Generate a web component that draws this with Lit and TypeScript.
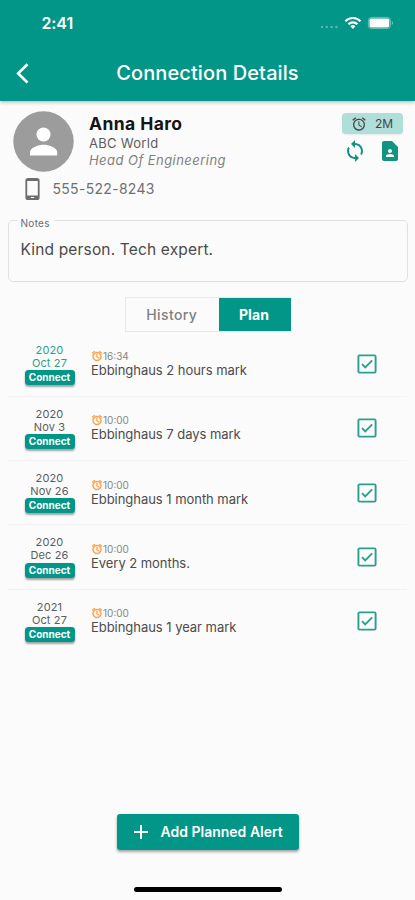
import { LitElement, html, css, svg } from "lit";
import { customElement, property } from "lit/decorators.js";
import { classMap } from "lit/directives/class-map.js";

const ALARM = svg`<path fill="currentColor" d="M22 5.72l-4.6-3.86-1.29 1.53 4.6 3.86L22 5.72zM7.88 3.39L6.6 1.86 2 5.71l1.29 1.53 4.59-3.85zM12.5 8H11v6l4.75 2.85.75-1.23-4-2.37V8zM12 4c-4.97 0-9 4.03-9 9s4.02 9 9 9a9 9 0 0 0 0-18zm0 16c-3.87 0-7-3.13-7-7s3.13-7 7-7 7 3.13 7 7-3.13 7-7 7z"/>`;

@customElement("plan-row")
class PlanRow extends LitElement {
  @property() year = "";
  @property() day = "";
  @property() time = "";
  @property() label = "";
  @property({ type: Boolean }) current = false;

  static styles = css`
    :host { display: flex; box-sizing: border-box; height: 64.25px; margin: 0 8px; border-bottom: 1px solid #f1f1f1; }
    :host(:last-of-type) { border-bottom: none; }
    .date { width: 50px; margin-left: 16.5px; padding-top: 11.2px; display: flex; flex-direction: column; align-items: center; font-size: 11px; line-height: 13px; letter-spacing: 0.15px; color: #5c5c5c; white-space: nowrap; }
    .date.current { color: #2ba08f; }
    .tag { box-sizing: border-box; width: 50px; height: 15px; margin-top: 0.2px; border-radius: 3.5px; background: #019687; color: #fff; font-size: 10px; line-height: 15px; font-weight: 700; text-align: center; letter-spacing: 0; box-shadow: 0 1.5px 2px rgba(0, 0, 0, 0.35); }
    .body { flex: 1; margin-left: 16.5px; padding-top: 17.5px; }
    .time { display: flex; align-items: center; height: 12px; font-size: 10px; line-height: 12px; color: #858585; }
    .time svg { width: 12px; height: 12px; color: #ff9d42; stroke: currentColor; stroke-width: 0.8; }
    .label { font-size: 13px; line-height: 16px; color: #4c4c4c; letter-spacing: -0.04px; white-space: nowrap; }
    .check { width: 24px; height: 24px; margin: 19.5px 28px 0 0; color: #2c9f91; }
  `;

  render() {
    return html`
      <div class=${classMap({ date: true, current: this.current })}>
        <span>${this.year}</span><span>${this.day}</span><span class="tag">Connect</span>
      </div>
      <div class="body">
        <div class="time"><svg viewBox="0 0 24 24">${ALARM}</svg><span>${this.time}</span></div>
        <div class="label">${this.label}</div>
      </div>
      <svg class="check" viewBox="0 0 24 24" fill="none" stroke="currentColor" stroke-width="1.9">
        <rect x="3.4" y="3.4" width="17.2" height="17.2" rx="1.2" /><path d="M7 12.2l3.2 3.2L17.2 8.4" />
      </svg>
    `;
  }
}

@customElement("app-root")
class AppRoot extends LitElement {
  static styles = css`
    :host { display: flex; flex-direction: column; box-sizing: border-box; width: 415px; height: 900px; overflow: hidden; background: #fbfbfb; font-family: Inter, Roboto, "Liberation Sans", sans-serif; color: #444; }
    svg { display: block; flex: none; }
    header { height: 100.5px; flex: none; background: #019687; color: #fff; box-shadow: 0 1px 4px rgba(0, 0, 0, 0.3); }
    .status { height: 46px; display: flex; align-items: center; padding: 0 20px 0 41.5px; }
    .clock { font-size: 16px; font-weight: 600; flex: 1; letter-spacing: -0.1px; }
    .bar { height: 54px; display: grid; grid-template-columns: 46px 1fr 46px; align-items: center; }
    .back { margin-left: 14px; }
    .title { text-align: center; font-size: 20px; font-weight: 500; white-space: nowrap; letter-spacing: 0.1px; }
    .person { display: flex; height: 73px; padding: 10px 11px 0 13px; box-sizing: border-box; flex: none; }
    .who { flex: 1; margin-left: 15px; padding-top: 2.5px; white-space: nowrap; }
    .name { font-size: 17.5px; line-height: 22px; font-weight: 650; color: #151515; letter-spacing: 0.4px; }
    .org { font-size: 13px; line-height: 16px; letter-spacing: 0.3px; color: #5c5c5c; }
    .role { font-size: 13px; line-height: 18px; font-style: italic; letter-spacing: 0.45px; color: #808080; }
    .side { width: 62px; padding-top: 2.5px; }
    .chip { display: flex; align-items: center; box-sizing: border-box; width: 61px; height: 21px; padding-left: 9px; gap: 8px; border-radius: 4px; background: #b0ded8; font-size: 12px; color: #444; box-shadow: 0 1px 2px rgba(0, 0, 0, 0.08); }
    .actions { display: flex; justify-content: space-between; margin: 5px 2px 0 1px; color: #129482; }
    .phone { display: flex; align-items: center; height: 30px; padding-left: 21px; font-size: 14px; letter-spacing: 0.3px; color: #707070; flex: none; }
    .phone span { margin-left: 8.5px; }
    fieldset { box-sizing: border-box; flex: none; margin: 8.5px 7px 0 8px; height: 69.5px; border: 1px solid #e0e0e0; border-radius: 5px; padding: 0 11.5px; min-width: 0; }
    legend { padding: 5px 4px 0; margin-left: -4px; font-size: 10px; line-height: 12px; height: 12px; color: #6c6c6c; letter-spacing: 0.3px; }
    .note { font-size: 15.5px; line-height: 20px; margin-top: 11px; letter-spacing: 0.16px; color: #4a4a4a; }
    .tabs { display: flex; flex: none; width: 165.5px; height: 35px; margin: 15px 0 0 125px; box-sizing: border-box; border: 1px solid #e8e8e8; font-size: 14px; line-height: 33px; text-align: center; }
    .tab { flex: 1; padding-right: 1.5px; color: #808080; font-weight: 500; letter-spacing: 0.4px; }
    .tab.on { flex: 0 0 71.5px; box-sizing: border-box; margin-right: -1px; background: #019687; color: #fff; font-weight: 700; letter-spacing: 0.1px; }
    .list { flex: none; height: 481px; margin-top: 1px; }
    .add { display: flex; align-items: center; box-sizing: border-box; flex: none; width: 182.5px; height: 36px; margin-left: 116.5px; padding-left: 15px; border-radius: 3px; background: #019687; color: #fff; font-size: 14px; font-weight: 600; box-shadow: 0 2px 3px rgba(0, 0, 0, 0.35); white-space: nowrap; }
    .add span { margin-left: 11px; }
    .home { flex: none; width: 148px; height: 5px; margin: 37px 0 0 134px; border-radius: 3px; background: #000; }
  `;

  render() {
    return html`
      <header>
        <div class="status">
          <span class="clock">2:41</span>
          <svg width="75" height="18" viewBox="0 0 75 18">
            <g fill="#fff" opacity="0.35"><circle cx="2" cy="13" r="1.2" /><circle cx="6.8" cy="13" r="1.2" /><circle cx="11.6" cy="13" r="1.2" /><circle cx="16.4" cy="13" r="1.2" /></g>
            <g fill="none" stroke="#fff" stroke-width="2.2"><path d="M25.3 7.2a10.6 10.6 0 0 1 15.2 0" /><path d="M28.4 10.2a6.4 6.4 0 0 1 9 0" /></g>
            <path fill="#fff" d="M30.4 12.2a3.7 3.7 0 0 1 5 0l-2.5 2.7z" />
            <rect x="48.4" y="3.4" width="22" height="11.2" rx="3" fill="none" stroke="#fff" stroke-opacity="0.4" />
            <rect x="49.5" y="4.5" width="19.8" height="9" rx="1.8" fill="#fff" />
            <path d="M71.8 7v4c1.7-.6 1.7-3.4 0-4z" fill="#fff" opacity="0.45" />
          </svg>
        </div>
        <div class="bar">
          <svg class="back" width="18" height="24" viewBox="0 0 18 24" fill="none" stroke="#fff" stroke-width="2.7"><path d="M13.5 3.2L4.2 12.4l9.3 9.2" /></svg>
          <div class="title">Connection Details</div>
        </div>
      </header>

      <section class="person">
        <svg width="61" height="61" viewBox="0 0 61 61">
          <circle cx="30.5" cy="30.5" r="30.2" fill="#9c9c9c" />
          <g fill="#fff"><circle cx="30.5" cy="23.5" r="7" /><path d="M17 44.5v-3.4c0-4.8 9-7.4 13.6-7.4s13.6 2.6 13.6 7.4v3.4z" /></g>
        </svg>
        <div class="who">
          <div class="name">Anna Haro</div>
          <div class="org">ABC World</div>
          <div class="role">Head Of Engineering</div>
        </div>
        <div class="side">
          <div class="chip"><svg width="16" height="16" viewBox="0 0 24 24">${ALARM}</svg><span>2M</span></div>
          <div class="actions">
            <svg width="24" height="24" viewBox="0 0 24 24" fill="currentColor"><path d="M12 4V1L8 5l4 4V6c3.31 0 6 2.69 6 6 0 1.01-.25 1.97-.7 2.8l1.46 1.46A7.93 7.93 0 0 0 20 12c0-4.42-3.58-8-8-8zm0 14c-3.31 0-6-2.69-6-6 0-1.01.25-1.97.7-2.8L5.24 7.74A7.93 7.93 0 0 0 4 12c0 4.42 3.58 8 8 8v3l4-4-4-4v3z" /></svg>
            <svg width="24" height="24" viewBox="0 0 24 24" fill="currentColor"><path d="M14 2H6c-1.1 0-2 .9-2 2v16c0 1.1.9 2 2 2h12c1.1 0 2-.9 2-2V8l-6-6zm-2 8c1.1 0 2 .9 2 2s-.9 2-2 2-2-.9-2-2 .9-2 2-2zm4 8H8v-.57c0-.81.48-1.53 1.22-1.85a6.95 6.95 0 0 1 5.56 0A2.01 2.01 0 0 1 16 17.43V18z" /></svg>
          </div>
        </div>
      </section>

      <section class="phone">
        <svg width="23" height="24" viewBox="0 0 23 24"><path fill="#6d6d6d" fill-rule="evenodd" d="M7 1h9a2.6 2.6 0 0 1 2.6 2.6v16.8A2.6 2.6 0 0 1 16 23H7a2.6 2.6 0 0 1-2.6-2.6V3.6A2.6 2.6 0 0 1 7 1zM6.2 4v14.5h10.6V4zM9.8 20v1h3.4v-1z" /></svg>
        <span>555-522-8243</span>
      </section>

      <fieldset><legend>Notes</legend><div class="note">Kind person. Tech expert.</div></fieldset>

      <nav class="tabs"><div class="tab">History</div><div class="tab on">Plan</div></nav>

      <section class="list">
        <plan-row year="2020" day="Oct 27" time="16:34" label="Ebbinghaus 2 hours mark" current></plan-row>
        <plan-row year="2020" day="Nov 3" time="10:00" label="Ebbinghaus 7 days mark"></plan-row>
        <plan-row year="2020" day="Nov 26" time="10:00" label="Ebbinghaus 1 month mark"></plan-row>
        <plan-row year="2020" day="Dec 26" time="10:00" label="Every 2 months."></plan-row>
        <plan-row year="2021" day="Oct 27" time="10:00" label="Ebbinghaus 1 year mark"></plan-row>
      </section>

      <div class="add">
        <svg width="18" height="18" viewBox="0 0 18 18" stroke="#fff" stroke-width="2"><path d="M9 2v14M2 9h14" /></svg>
        <span>Add Planned Alert</span>
      </div>
      <div class="home"></div>
    `;
  }
}
